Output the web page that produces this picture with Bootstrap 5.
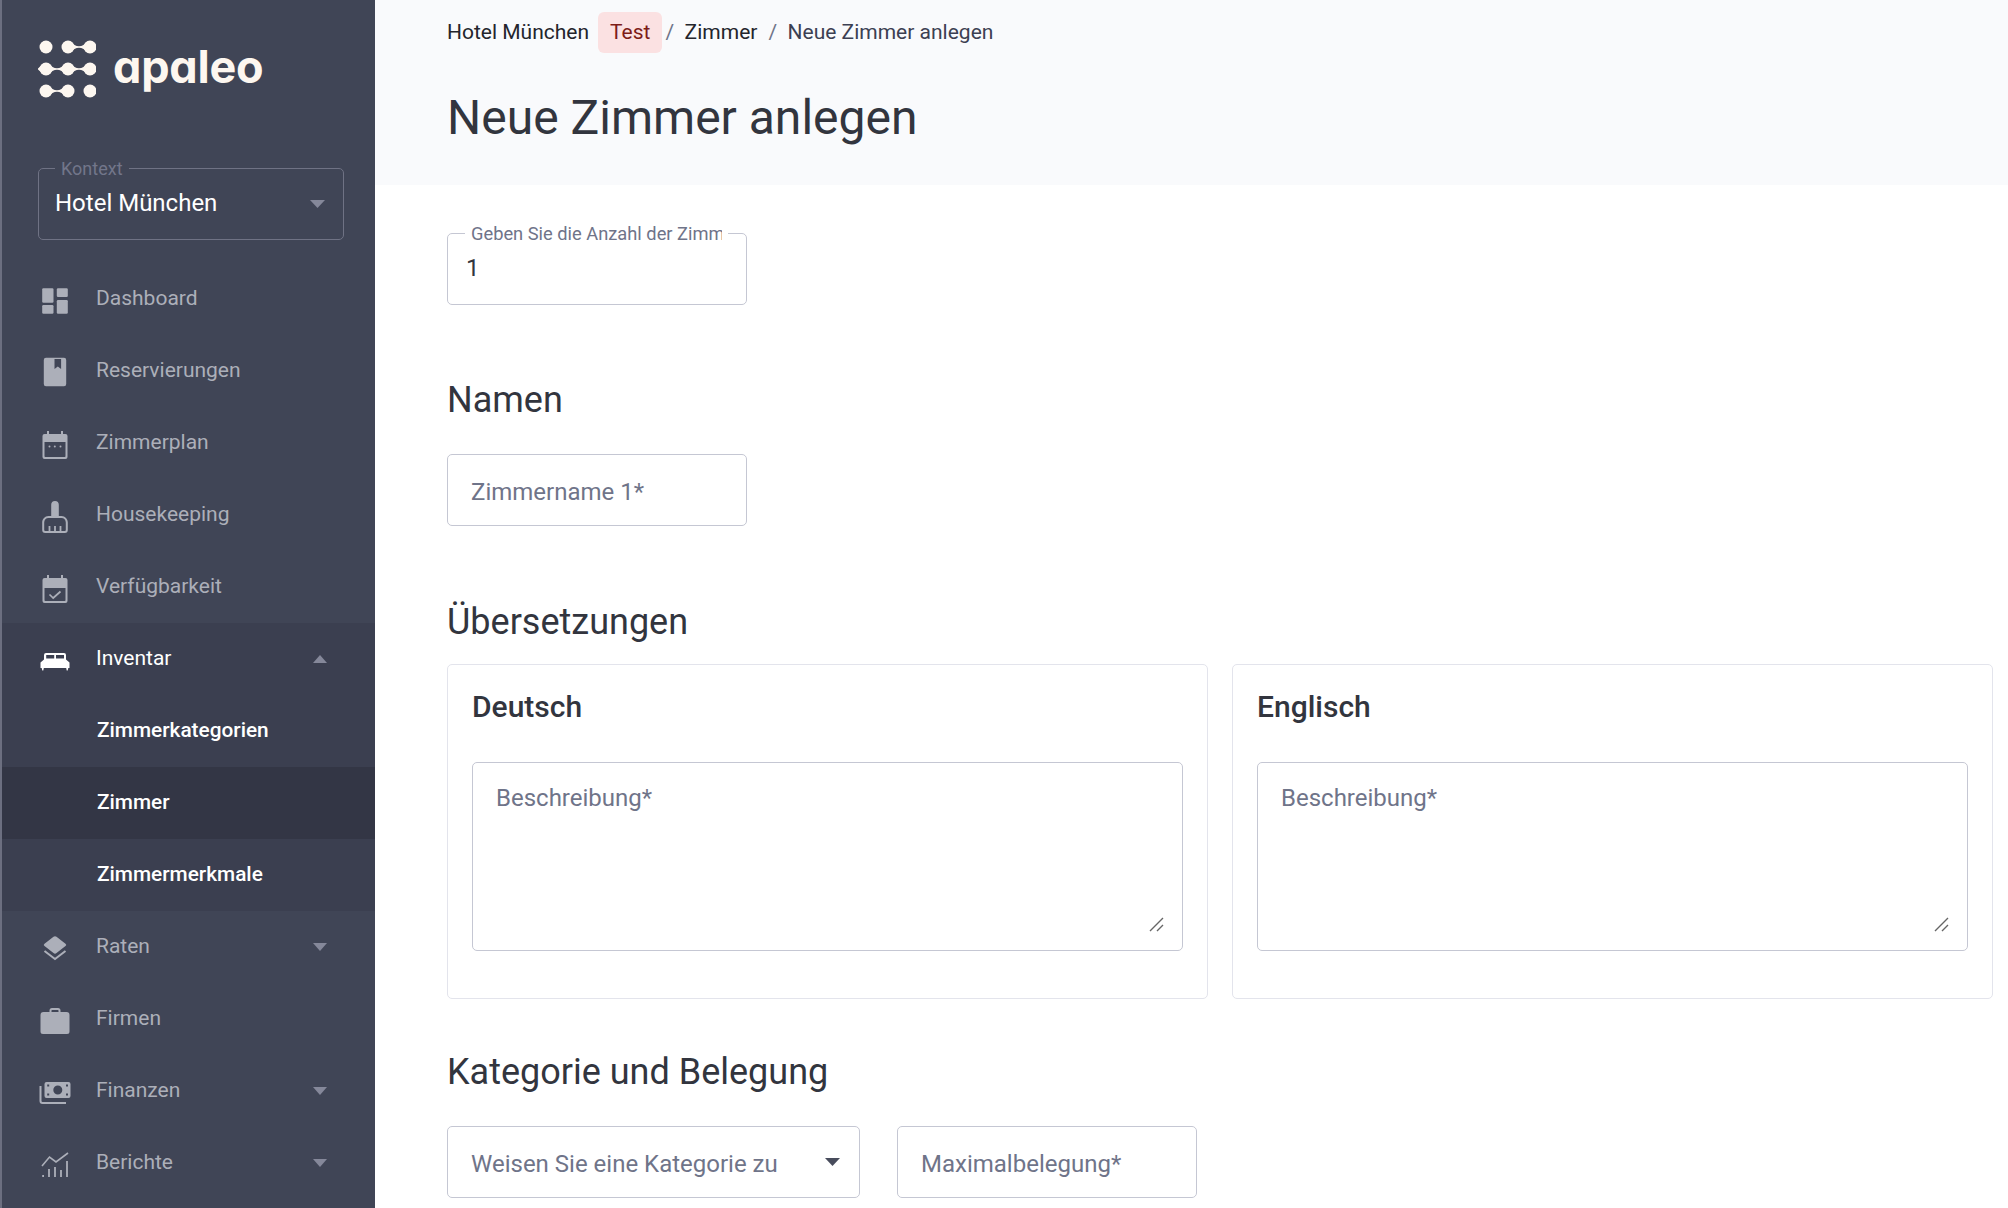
<!DOCTYPE html>
<html lang="de">
<head>
<meta charset="utf-8">
<title>Neue Zimmer anlegen</title>
<link href="https://cdn.jsdelivr.net/npm/bootstrap@5.3.0/dist/css/bootstrap.min.css" rel="stylesheet">
<style>
:root{--side:#404556;--side-group:#3b3f50;--side-active:#333645;--muted:#acafb9;--ink:#32353e;--line:#c5c7d3;--ph:#6f7489;}
html,body{height:100%;}
body{font-family:Roboto,"Liberation Sans",sans-serif;color:var(--ink);height:1208px;overflow:hidden;background:#fff;}
.app-side{width:375px;flex:none;background:var(--side);border-left:2px solid #6c6f80;height:1208px;overflow:hidden;}
.logo-wrap{padding:38px 0 0 36px;height:168px;flex:none;}
.logo-word{font-family:Inter,"Liberation Sans",sans-serif;font-feature-settings:"cv11" 1;font-weight:700;font-size:45px;line-height:1;letter-spacing:-.2px;color:#fdf7f0;margin:6px 0 0 17px;}
.ctx-wrap{margin:0 31px 0 36px;position:relative;}
.ctx-wrap .form-select{height:72px;background-color:transparent;color:#fff;border:1.5px solid #6f7284;border-radius:5px;font-size:24px;padding:0 40px 3px 16px;background-image:url("data:image/svg+xml,%3Csvg xmlns='http://www.w3.org/2000/svg' viewBox='0 0 15 8'%3E%3Cpath d='M0 0h15L7.5 8z' fill='%2385889a'/%3E%3C/svg%3E");background-size:15px 8px;background-position:right 18px center;}
.ctx-wrap .form-select option{color:#222;}
.ctx-label{position:absolute;left:17px;top:-9px;padding:0 6px;background:var(--side);color:#72768a;font-size:18px;line-height:20px;}
.side-nav{margin-top:23px;}
.side-nav .nav-link{height:72px;color:var(--muted);font-size:21px;font-weight:400;padding:0 48px 0 37px;display:flex;align-items:center;}
.side-nav .nav-link svg.ic{width:32px;height:40px;flex:none;margin-right:25px;fill:currentColor;}
.nav-group{background:var(--side-group);}
.nav-group .nav-link.head{color:#fff;}
.nav-group .nav-link.sub{color:#fff;font-weight:500;font-size:20.8px;padding-left:95px;}
.nav-group .nav-link.sub.current{background:var(--side-active);}
.caret-down,.caret-up{margin-left:auto;width:0;height:0;border-left:7.5px solid transparent;border-right:7.5px solid transparent;}
.caret-down{border-top:8px solid #85889a;}
.caret-up{border-bottom:8px solid #85889a;}
.page-head{height:185px;background:#f9fafc;padding:0 72px;}
.crumbs{height:64px;align-items:center;font-size:21px;margin:0;padding-top:1px;}
.crumbs .breadcrumb-item,.crumbs .breadcrumb-item a{color:#23252c;text-decoration:none;}
.crumbs .breadcrumb-item.active{color:#3c4052;}
.crumbs .breadcrumb-item+.breadcrumb-item{padding-left:11px;}
.crumbs .breadcrumb-item+.breadcrumb-item::before{color:#6f7489;padding-right:10.5px;}
.crumbs .breadcrumb-item.after-tag{padding-left:3px;}
.test-tag{background:#fbe1e2;color:#7d1c17;font-weight:400;font-size:21px;border-radius:6px;padding:0 12px;line-height:41px;margin:0 0 0 9px;}
.page-title{font-size:48px;font-weight:400;line-height:1.2;margin:0;color:var(--ink);padding-top:25px;}
.page-body{padding:48px 15px 0 72px;}
.field{position:relative;width:300px;}
.field .form-control,.sel-box.form-select{height:72px;border:1.5px solid var(--line);border-radius:5px;font-size:24px;color:var(--ink);padding:3px 23px 0;}
.field .form-control::placeholder,.grid-area::placeholder{color:var(--ph);opacity:1;}
.field.num .form-control{padding:0 18px 2px;}
.field-label{position:absolute;left:18px;top:-9px;width:263px;padding:0 0 0 6px;border-right:6px solid #fff;background:#fff;color:#6f7489;font-size:18.3px;line-height:20px;white-space:nowrap;overflow:hidden;}
.sect-title{font-size:36px;font-weight:400;line-height:38px;margin:77px 0 35px;color:var(--ink);}
.sect-title.first{margin-top:76px;}
.sect-title.tight{margin-bottom:23px;}
.sect-title.near{margin-top:54px;}
.lang-card{border:1.5px solid #e3e4ec;border-radius:5px;height:335px;padding:23px 24px 48px;}
.lang-title{font-size:30px;font-weight:500;line-height:38px;margin:0 0 36px;color:var(--ink);}
.area-wrap{position:relative;}
.grid-area.form-control{height:189px;border:1.5px solid var(--line);border-radius:5px;font-size:24px;padding:17px 23px;resize:none;color:var(--ink);}
.grip{position:absolute;right:19px;bottom:19px;width:15px;height:15px;}
.sel-box.form-select{width:413px;color:var(--ph);background-image:url("data:image/svg+xml,%3Csvg xmlns='http://www.w3.org/2000/svg' viewBox='0 0 15 8'%3E%3Cpath d='M0 0h15L7.5 8z' fill='%23484c5c'/%3E%3C/svg%3E");background-size:15px 8px;background-position:right 19px center;}
.pair-row{gap:37px;}
</style>
</head>
<body class="d-flex">
<aside class="app-side d-flex flex-column">
  <div class="logo-wrap d-flex align-items-start">
    <svg width="58" height="60" viewBox="0 0 58 60" fill="#fdf7f0" aria-hidden="true">
      <circle cx="8" cy="9" r="6.500"/><circle cx="30" cy="9" r="6.500"/><circle cx="52" cy="9" r="6.500"/>
      <circle cx="8" cy="31" r="6.500"/><circle cx="30" cy="31" r="6.500"/><circle cx="52" cy="31" r="6.500"/>
      <circle cx="8" cy="53" r="6.500"/><circle cx="30" cy="53" r="6.500"/><circle cx="52" cy="53" r="6.500"/>
      <path d="M32 3.500Q41 12.900 50 3.500V14.500Q41 5.100 32 14.500z"/>
      <path d="M10 25.500Q19 34.900 28 25.500V36.500Q19 27.100 10 36.500z"/>
      <path d="M32 25.500Q41 34.900 50 25.500V36.500Q41 27.100 32 36.500z"/>
      <path d="M10 47.500Q19 56.900 28 47.500V58.500Q19 49.100 10 58.500z"/>
      <path d="M-.5 31L4 27V35z"/><path d="M58 31L56 27V35z"/>
    </svg>
    <span class="logo-word">apaleo</span>
  </div>
  <div class="ctx-wrap">
    <select class="form-select" aria-label="Kontext"><option>Hotel München</option></select>
    <span class="ctx-label">Kontext</span>
  </div>
  <nav class="side-nav nav flex-column">
    <a class="nav-link" href="#"><svg class="ic" viewBox="0 0 32 40"><rect x="3.200" y="9.300" width="11.300" height="14.400" rx="1.200"/><rect x="17.800" y="9.300" width="11" height="8.700" rx="1.200"/><rect x="3.200" y="26" width="11.300" height="8.700" rx="1.200"/><rect x="17.800" y="21" width="11" height="13.700" rx="1.200"/></svg>Dashboard</a>
    <a class="nav-link" href="#"><svg class="ic" viewBox="0 0 32 40"><path fill-rule="evenodd" d="M7 6.700H25a2.200 2.200 0 0 1 2.200 2.200V33a2.200 2.200 0 0 1-2.200 2.200H7A2.200 2.200 0 0 1 4.800 33V8.900A2.200 2.200 0 0 1 7 6.700zM15.500 8V18l3.300-2.400 3.300 2.400V8z"/></svg>Reservierungen</a>
    <a class="nav-link" href="#"><svg class="ic" viewBox="0 0 32 40"><path fill-rule="evenodd" d="M8 8h2v3h12V8h2v3h2.500A2 2 0 0 1 28.500 13V34a2 2 0 0 1-2 2H5.500a2 2 0 0 1-2-2V13A2 2 0 0 1 5.500 11H8zM5.500 19V33.300A.7.7 0 0 0 6.200 34H25.800a.7.7 0 0 0 .7-.7V19z"/><circle cx="10.500" cy="23.500" r="1"/><circle cx="15.800" cy="23.500" r="1"/><circle cx="21.500" cy="23.500" r="1"/></svg>Zimmerplan</a>
    <a class="nav-link" href="#"><svg class="ic" viewBox="0 0 32 40"><path fill-rule="evenodd" d="M16 6a3.800 3.800 0 0 1 3.800 3.800V21h2.700c3.600 0 6.300 3 6.300 6.500V35a3 3 0 0 1-3 3H6.200a3 3 0 0 1-3-3V27.500C3.200 24 5.900 21 9.500 21h2.700V9.800A3.800 3.800 0 0 1 16 6zM5.200 27.500V35a1 1 0 0 0 1 1H9.600V31h1.800v5h3.700V31h1.800v5h3.700V31h1.800v5h3.400a1 1 0 0 0 1-1V27.500C26.800 25 25 23 22.500 23H9.500C7 23 5.200 25 5.200 27.500z"/></svg>Housekeeping</a>
    <a class="nav-link" href="#"><svg class="ic" viewBox="0 0 32 40"><path fill-rule="evenodd" d="M8 8h2v3h12V8h2v3h2.500a2 2 0 0 1 2 2V34a2 2 0 0 1-2 2H5.500a2 2 0 0 1-2-2V13a2 2 0 0 1 2-2H8zM5.500 21V33.300a.7.7 0 0 0 .7.7H25.800a.7.7 0 0 0 .7-.7V21z"/><path d="M10.500 27.500l3.700 3.500 7.300-6.500" fill="none" stroke="currentColor" stroke-width="1.700"/></svg>Verfügbarkeit</a>
    <div class="nav-group">
      <a class="nav-link head" href="#"><svg class="ic" viewBox="0 0 32 40"><path fill-rule="evenodd" d="M7 14H25a2 2 0 0 1 2 2V20.500l3.500 3V29h-1.200l-.6 2.500h-1L27.200 29H4.800l-.5 2.500h-1L2.700 29H1.500V23.500l3.500-3V16a2 2 0 0 1 2-2zM7.200 16v3.500H15.200V16zM17 16v3.500H25V16z"/></svg>Inventar<span class="caret-up"></span></a>
      <a class="nav-link sub" href="#">Zimmerkategorien</a>
      <a class="nav-link sub current" href="#">Zimmer</a>
      <a class="nav-link sub" href="#">Zimmermerkmale</a>
    </div>
    <a class="nav-link" href="#"><svg class="ic" viewBox="0 0 32 40"><path d="M14.500 9.700a2.500 2.500 0 0 1 3 0l9 7a1.500 1.500 0 0 1 0 2.400l-9 7a2.500 2.500 0 0 1-3 0l-9-7a1.500 1.500 0 0 1 0-2.400z"/><path d="M5.500 24l10.500 8 10.500-8" fill="none" stroke="currentColor" stroke-width="2"/></svg>Raten<span class="caret-down"></span></a>
    <a class="nav-link" href="#"><svg class="ic" viewBox="0 0 32 40"><path fill-rule="evenodd" d="M13 9h6a2.500 2.500 0 0 1 2.500 2.500V13H27.500a3 3 0 0 1 3 3V32.500a2.500 2.500 0 0 1-2.500 2.500H4a2.500 2.500 0 0 1-2.500-2.500V16a3 3 0 0 1 3-3H10.500V11.500A2.500 2.500 0 0 1 13 9zM12.500 13h7V11.500a.5.500 0 0 0-.5-.5H13a.5.500 0 0 0-.5.5z"/></svg>Firmen</a>
    <a class="nav-link" href="#"><svg class="ic" viewBox="0 0 32 40"><path fill-rule="evenodd" d="M7.500 11H29.500a2 2 0 0 1 2 2V25a2 2 0 0 1-2 2H7.500a2 2 0 0 1-2-2V13a2 2 0 0 1 2-2zM18.800 14.500a4.500 4.500 0 1 0 0 9 4.500 4.500 0 0 0 0-9zM8.200 13.500v2h2v-2zM27 13.500v2h2v-2zM8.200 22.500v2h2v-2zM27 22.500v2h2v-2z"/><path d="M1.500 15V30a2 2 0 0 0 2 2H27" fill="none" stroke="currentColor" stroke-width="2"/></svg>Finanzen<span class="caret-down"></span></a>
    <a class="nav-link" href="#"><svg class="ic" viewBox="0 0 32 40"><path d="M3 23L10.500 14l6.500 5L29 10" fill="none" stroke="currentColor" stroke-width="1.600"/><path d="M3.200 32h1.800v2H3.200zM9.100 26h1.800v8H9.100zM15.100 24h1.800v10h-1.800zM21.100 27h1.800v7h-1.800zM27.100 18h1.800v16h-1.800z"/></svg>Berichte<span class="caret-down"></span></a>
  </nav>
</aside>
<main class="flex-grow-1 overflow-hidden">
  <header class="page-head">
    <ol class="breadcrumb crumbs">
      <li class="breadcrumb-item d-flex align-items-center"><a href="#">Hotel München</a><span class="badge test-tag">Test</span></li>
      <li class="breadcrumb-item after-tag"><a href="#">Zimmer</a></li>
      <li class="breadcrumb-item active" aria-current="page">Neue Zimmer anlegen</li>
    </ol>
    <h1 class="page-title">Neue Zimmer anlegen</h1>
  </header>
  <form class="page-body">
    <div class="field num">
      <input class="form-control" type="text" value="1" aria-label="Anzahl">
      <span class="field-label">Geben Sie die Anzahl der Zimmer ein</span>
    </div>
    <h2 class="sect-title first">Namen</h2>
    <div class="field"><input class="form-control" type="text" placeholder="Zimmername 1*"></div>
    <h2 class="sect-title tight">Übersetzungen</h2>
    <div class="row g-4">
      <div class="col-6">
        <div class="lang-card">
          <h3 class="lang-title">Deutsch</h3>
          <div class="area-wrap">
            <textarea class="form-control grid-area" placeholder="Beschreibung*"></textarea>
            <svg class="grip" viewBox="0 0 15 15" aria-hidden="true"><path d="M1 14L14 1M8 14l6-6" stroke="#666" stroke-width="1.400" fill="none"/></svg>
          </div>
        </div>
      </div>
      <div class="col-6">
        <div class="lang-card">
          <h3 class="lang-title">Englisch</h3>
          <div class="area-wrap">
            <textarea class="form-control grid-area" placeholder="Beschreibung*"></textarea>
            <svg class="grip" viewBox="0 0 15 15" aria-hidden="true"><path d="M1 14L14 1M8 14l6-6" stroke="#666" stroke-width="1.400" fill="none"/></svg>
          </div>
        </div>
      </div>
    </div>
    <h2 class="sect-title near">Kategorie und Belegung</h2>
    <div class="d-flex pair-row">
      <select class="form-select sel-box" aria-label="Kategorie"><option>Weisen Sie eine Kategorie zu</option></select>
      <div class="field"><input class="form-control" type="text" placeholder="Maximalbelegung*"></div>
    </div>
  </form>
</main>
</body>
</html>
